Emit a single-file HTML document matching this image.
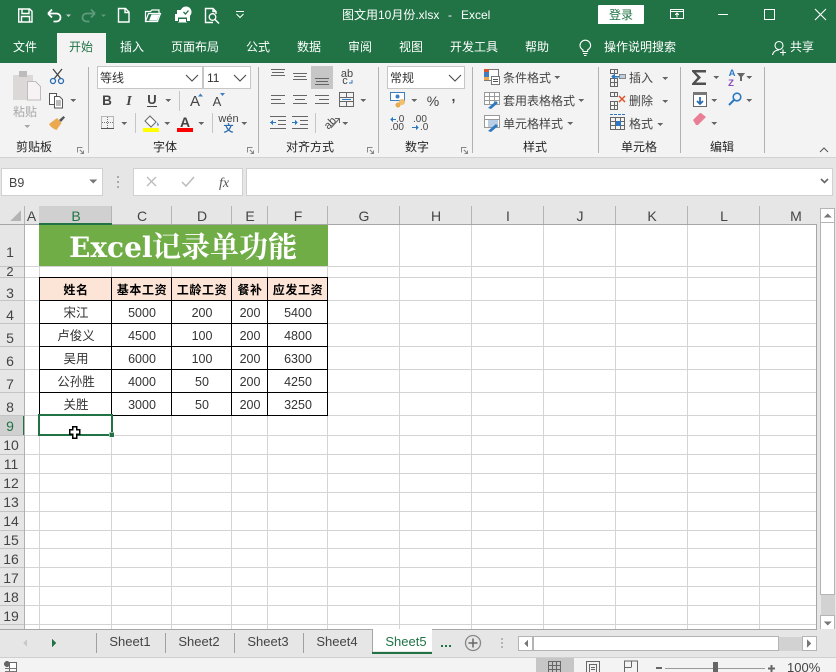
<!DOCTYPE html>
<html><head><meta charset="utf-8"><style>
html,body{margin:0;padding:0;background:#fff}
svg{display:block;font-family:"Liberation Sans","Noto Sans CJK SC",sans-serif;font-size:12px}
.w{fill:#fff}.t{fill:#262626}.c{text-anchor:middle}
.g text{fill:#262626;text-anchor:middle}
.r text{fill:#444;text-anchor:middle;font-size:14px}
.b text{fill:#333;text-anchor:middle;font-size:12.5px}
.h text{fill:#000;text-anchor:middle;font-weight:700;font-size:12px;letter-spacing:.6px}
.ln{stroke:#d4d4d4;stroke-width:1;fill:none}
.k{stroke:#000;stroke-width:1;fill:none}
.i{stroke:#666;stroke-width:1;fill:none}
.q{stroke:#fff;fill:none;stroke-width:1.4}
</style></head><body>
<svg width="836" height="672" viewBox="0 0 836 672" shape-rendering="crispEdges">
<defs><path id="d" d="M0 0h6l-3 3z" fill="#666"/></defs>
<rect width="836" height="672" fill="#fff"/>
<!-- title / tabs -->
<rect width="836" height="63" fill="#217346"/>
<rect x="57" y="33" width="49" height="30" fill="#f3f3f3"/>
<!-- QAT -->
<g shape-rendering="auto">
<path class="q" d="M18.7 9h11l2.3 2.3V22H18.7zM22 9v4.500h7V9M21.500 22v-5.500h8V22" stroke-width="1.500"/>
<path d="M48 13.500l4-4M48 13.500l4 4M48 13.500h8.500a4 4 0 0 1 0 8h-3" fill="none" stroke="#fff" stroke-width="1.800"/>
<path d="M66 14.500h5l-2.500 2.500z" fill="#ccc"/>
<path d="M95 13.500l-4-4M95 13.500l-4 4M95 13.500h-8.500a4 4 0 0 0 0 8h3" fill="none" stroke="#5f9a7b" stroke-width="1.800"/>
<path d="M101 14.500h5l-2.500 2.500z" fill="#5f9a7b"/>
<path class="q" d="M118.500 8.500h7l3.500 3.500v10h-10.500zM125 8.500v4h4" stroke-width="1.200"/>
<path d="M145.500 21.500v-10h5l1.500-1.500h7v3M145.500 21.500l3-8h12l-3 8z" fill="none" stroke="#fff" stroke-width="1.200"/><path d="M149 20.500l2.500-6h8l-2.500 6z" class="w"/>
<path d="M175 14h15v7h-3v2h-9v-2h-3z" class="w"/><rect x="178" y="17.500" width="9" height="5" fill="#217346"/><rect x="179" y="19" width="7" height="3" fill="#fff"/><circle cx="186" cy="12" r="5.500" fill="#fff"/><path d="M183.500 12l2 2 3-3.500" fill="none" stroke="#217346" stroke-width="1.300"/><rect x="177" y="10" width="4" height="4" fill="#fff"/>
<path class="q" d="M216 14V11.500L213 8.500h-7.500V22.500H213M213 8.500v3h3" stroke-width="1.200"/><circle cx="212.500" cy="17" r="3.300" fill="none" stroke="#fff" stroke-width="1.300"/><path d="M215 19.500l4 4" stroke="#fff" stroke-width="1.500"/>
<path d="M236 11.500h8M236.500 14l3.500 3.500 3.500-3.500" fill="none" stroke="#fff" stroke-width="1.100"/>
</g>
<text x="342" y="19" class="w">图文用10月份.xlsx</text><text x="448" y="19" class="w">-</text><text x="461" y="19" class="w">Excel</text>
<rect x="598" y="5" width="46" height="19" rx="1" fill="#fff"/>
<text x="621" y="19" class="c" style="fill:#217346">登录</text>
<path d="M670.500 9.500h13v9h-13zM670.500 11.500h13M677 17.500v-4M675 15l2-2 2 2" fill="none" stroke="#fff"/>
<rect x="718" y="14" width="10" height="1" fill="#fff"/>
<rect x="764.500" y="9.500" width="10" height="10" fill="none" stroke="#fff"/>
<path d="M815 9l11 11M826 9l-11 11" stroke="#fff" stroke-width="1.100" shape-rendering="auto"/>
<g class="w">
<text x="13" y="51">文件</text><text x="120" y="51">插入</text><text x="171" y="51">页面布局</text><text x="246" y="51">公式</text><text x="297" y="51">数据</text><text x="348" y="51">审阅</text><text x="399" y="51">视图</text><text x="450" y="51">开发工具</text><text x="525" y="51">帮助</text><text x="604" y="51">操作说明搜索</text><text x="790" y="51">共享</text>
</g>
<text x="69" y="51" style="fill:#217346">开始</text>
<g shape-rendering="auto" fill="none" stroke="#fff">
<path d="M583 51.500v-1.500c-1.500-1-3-2.500-3-4.500a5.300 5.300 0 0 1 10.600 0c0 2-1.500 3.500-3 4.500v1.500zM583 53.500h4.500M584 55.500h2.500" stroke-width="1.100"/>
<circle cx="779" cy="45.500" r="4" stroke-width="1.100"/><path d="M772.500 55c.5-3 3-5 6.500-5M780 52.500h6M783 49.500v6" stroke-width="1.100"/>
</g>
<!-- ribbon -->
<rect y="63" width="836" height="94" fill="#f3f3f3"/>
<rect y="157" width="836" height="68" fill="#e6e6e6"/>
<rect y="157" width="836" height="1" fill="#d2d2d2"/>
<g fill="#b1b1b1"><rect x="88" y="67" width="1" height="86"/><rect x="258" y="67" width="1" height="86"/><rect x="378" y="67" width="1" height="86"/><rect x="472" y="67" width="1" height="86"/><rect x="598" y="67" width="1" height="86"/><rect x="680" y="67" width="1" height="86"/><rect x="764" y="67" width="1" height="86"/>
<rect x="179" y="91" width="1" height="20" fill="#c6c6c6"/><rect x="135" y="113" width="1" height="20" fill="#c6c6c6"/><rect x="212" y="113" width="1" height="20" fill="#c6c6c6"/><rect x="315" y="113" width="1" height="20" fill="#c6c6c6"/></g>
<g class="g">
<text x="34" y="151">剪贴板</text><text x="165" y="151">字体</text><text x="310" y="151">对齐方式</text><text x="417" y="151">数字</text><text x="535" y="151">样式</text><text x="639" y="151">单元格</text><text x="722" y="151">编辑</text>
</g>
<!-- dialog launchers -->
<g fill="none" stroke="#888"><path d="M77.500 152.500v-5h5M84 154l-4-4M80.500 153.500h3v-3"/><path d="M247.500 152.500v-5h5M254 154l-4-4M250.500 153.500h3v-3"/><path d="M367.500 152.500v-5h5M374 154l-4-4M370.500 153.500h3v-3"/><path d="M461.500 152.500v-5h5M468 154l-4-4M464.500 153.500h3v-3"/></g>
<!-- clipboard group -->
<rect x="13" y="75" width="20" height="25" rx="1" fill="#dcd8d8"/><rect x="19" y="71" width="8" height="6" fill="#bcbcbc"/>
<path d="M27.500 81.500h8l5 5v13.500h-13z" fill="#f7f3f5" stroke="#bdbdbd"/>
<text x="25" y="116" class="c" style="fill:#a8a8a8;font-size:12px">粘贴</text>
<use href="#d" x="24" y="125" style="opacity:.55"/>
<g shape-rendering="auto">
<path d="M53 69l8 10M62 69l-8 10" stroke="#444" stroke-width="1.300" fill="none"/><circle cx="53" cy="81" r="2.500" fill="none" stroke="#2b6cb0" stroke-width="1.300"/><circle cx="61" cy="81" r="2.500" fill="none" stroke="#2b6cb0" stroke-width="1.300"/>
<path d="M49.500 93.500h7v11h-7z" fill="#fff" stroke="#555"/><path d="M54.500 96.500h5l3 3v8.500h-8z" fill="#fff" stroke="#555"/><path d="M56 101h5M56 103h5M56 105h5" stroke="#777"/>
<path d="M59 120l4.500-4 1.500 1.500-4 4.500z" fill="#555"/><path d="M49 124l8-6 4.500 5-5 7c-3-1-6-3-7.500-6z" fill="#eba950"/>
</g>
<use href="#d" x="70" y="99"/>
<!-- font boxes -->
<g fill="#fff" stroke="#c6c6c6"><rect x="97.500" y="66.500" width="105" height="22"/><rect x="203.500" y="66.500" width="47" height="22"/><rect x="387.500" y="66.500" width="77" height="22"/></g>
<text x="100" y="82" style="fill:#333">等线</text><text x="207" y="82" style="fill:#333">11</text><text x="390" y="82" style="fill:#333">常规</text>
<g fill="none" stroke="#444" shape-rendering="auto"><path d="M186 75l6 6 6-6M234 75l6 6 6-6M449 75l6 6 6-6"/></g>
<g shape-rendering="auto">
<text x="107" y="105" class="c" style="fill:#444;font-weight:700;font-size:13.500px">B</text>
<text x="129" y="105" class="c" style="fill:#444;font-style:italic;font-family:'Liberation Serif';font-weight:700;font-size:14px">I</text>
<text x="152" y="104" class="c" style="fill:#444;font-weight:700;font-size:13px">U</text><rect x="147" y="106" width="10" height="1" fill="#444"/>
<text x="195" y="106" class="c" style="fill:#444;font-size:15px">A</text><path d="M198 96.500l2.500-3 2.500 3z" fill="#3f7fbf"/>
<text x="217" y="106" class="c" style="fill:#444;font-size:13px">A</text><path d="M220 93h5l-2.500 3z" fill="#3f7fbf"/>
</g>
<use href="#d" x="165" y="99"/>
<rect x="101.500" y="116.500" width="12" height="12" fill="none" stroke="#777" stroke-dasharray="1 1"/><path d="M107.500 117v12M102 122.500h12" stroke="#777" stroke-dasharray="1 1"/><rect x="101" y="128" width="13" height="1" fill="#555"/>
<use href="#d" x="121" y="122"/>
<g shape-rendering="auto"><path d="M150 116l6 6-5 5-6-6z" fill="#fff" stroke="#666"/><path d="M157 122l2 3-1.500 1z" fill="#2b79c2"/></g>
<rect x="143" y="128" width="16" height="4" fill="#ffff00"/>
<use href="#d" x="164" y="122"/>
<text x="185" y="127" class="c" style="fill:#444;font-weight:700;font-size:14px">A</text>
<rect x="177" y="128" width="16" height="4" fill="#ff0000"/>
<use href="#d" x="198" y="122"/>
<text x="228.500" y="122" class="c" style="fill:#444;font-size:11px">wén</text>
<text x="228.500" y="132" class="c" style="fill:#2b6cb0;font-size:10px;font-weight:700">文</text>
<use href="#d" x="241" y="122"/>
<!-- alignment -->
<rect x="311" y="66" width="22" height="23" fill="#c6c6c6"/>
<g stroke="#666" fill="none">
<path d="M271 69.500h14M272 72.500h12M271 75.500h14"/>
<path d="M293 73.500h14M294 76.500h12M293 79.500h14"/>
<path d="M315 78.500h14M316 81.500h12M315 84.500h14"/>
<path d="M271 95.500h14M271 99.500h10M271 103.500h14M293 95.500h14M295 99.500h10M293 103.500h14M315 95.500h14M319 99.500h10M315 103.500h14"/>
<path d="M278 120.500h8M278 124.500h8M270 116.500h16M270 128.500h16"/>
<path d="M300 120.500h8M300 124.500h8M292 116.500h16M292 128.500h16"/>
<rect x="339.500" y="92.500" width="14" height="14"/><path d="M340 97.500h13M340 101.500h13M346.500 92v5M346.500 102v5"/>
</g>
<path d="M342 99.500h9" stroke="#2b79c2"/>
<path d="M270 122.500h6M296 122.500h-4" stroke="#2b79c2"/><path d="M270 122.500l3-2.500v5zM298 122.500l-3-2.500v5z" fill="#2b79c2"/>
<text x="347" y="77" class="c" style="fill:#444;font-size:11px">ab</text><text x="345" y="84" class="c" style="fill:#444;font-size:11px">c</text><path d="M352 80v3h-3" fill="none" stroke="#2b79c2"/>
<use href="#d" x="360" y="99"/>
<g shape-rendering="auto"><text x="329" y="127" class="c" style="fill:#444;font-size:11px" transform="rotate(-45 329 122)">ab</text><path d="M331 128l8-9M335 118.500h4.500v4.500" fill="none" stroke="#666"/></g>
<use href="#d" x="342" y="122"/>
<!-- number -->
<rect x="390.500" y="92.500" width="14" height="8" fill="#fff" stroke="#3f7fbf"/><circle cx="397.500" cy="96.500" r="2" fill="#3f7fbf"/><circle cx="402" cy="102" r="3" fill="#f0c070"/><circle cx="398" cy="105" r="2.500" fill="#eba950"/>
<use href="#d" x="411" y="99"/>
<text x="433" y="106" class="c" style="fill:#444;font-size:14px">%</text>
<text x="453.500" y="101" class="c" style="fill:#444;font-weight:700;font-size:14px">,</text>
<g shape-rendering="auto"><text x="396" y="122" style="fill:#444;font-size:10px">.0</text><text x="390" y="130" style="fill:#444;font-size:10px">.00</text><text x="413" y="122" style="fill:#444;font-size:10px">.00</text><text x="420" y="130" style="fill:#444;font-size:10px">.0</text></g>
<path d="M391 119.500h5M412 127.500h6" stroke="#2b79c2"/><path d="M390 119.500l3-2.500v5zM419 127.500l-3-2.500v5z" fill="#2b79c2"/>
<!-- styles -->
<rect x="484.500" y="69.500" width="14" height="11" fill="#fff" stroke="#777"/><rect x="484" y="69" width="5" height="3" fill="#d9552b"/><rect x="484" y="72" width="5" height="5" fill="#3f7fbf"/><rect x="484" y="77" width="5" height="3" fill="#eba950"/><rect x="491.500" y="76.500" width="8" height="8" fill="#fff" stroke="#777"/><path d="M493 79.500h5M493 81.500h5" stroke="#555"/>
<g fill="none" stroke="#999"><rect x="484.500" y="92.500" width="15" height="12" fill="#fff"/><path d="M484 96.500h15M484 100.500h15M489.500 92v12M494.500 92v12"/><rect x="484.500" y="115.500" width="15" height="12" fill="#fff"/><path d="M484 119.500h15"/></g>
<rect x="488" y="120" width="10" height="7" fill="#b9cde4"/>
<path d="M488 108l8-7 2 2-7 6z" fill="#2b79c2" shape-rendering="auto"/><path d="M488 131l8-7 2 2-7 6z" fill="#2b79c2" shape-rendering="auto"/>
<text x="503" y="82" style="fill:#444">条件格式</text><text x="503" y="105" style="fill:#444">套用表格格式</text><text x="503" y="128" style="fill:#444">单元格样式</text>
<use href="#d" x="554" y="76"/><use href="#d" x="578" y="99"/><use href="#d" x="567" y="122"/>
<!-- cells -->
<g fill="none" stroke="#666">
<path d="M610.500 69.500h7v4h-7zM610.500 78.500h7v4h-7zM610.500 78.500v4M614.500 69v4M614.500 78v9M610.500 82.500v4h7v-4"/>
<path d="M610.500 92.500h7v4h-7zM610.500 101.500h7v4h-7zM610.500 105.500v4h7v-4M614.500 92v4M614.500 101v9"/>
<rect x="610.500" y="117.500" width="14" height="12"/><path d="M610 121.500h15M610 125.500h15M615.500 117v13M620.500 117v13"/>
</g>
<path d="M612 76.500h7" stroke="#2b79c2" stroke-width="1.500"/><rect x="619.500" y="74.500" width="6" height="4" fill="#bcd" stroke="#888"/><path d="M611 76.500l4-3v6z" fill="#2b79c2"/>
<path d="M619 96l6 6M625 96l-6 6" stroke="#d9552b" stroke-width="1.500" shape-rendering="auto"/>
<path d="M610 114.500h15" stroke="#2b79c2" stroke-dasharray="3 1"/><rect x="616" y="121" width="5" height="5" fill="#2b79c2"/>
<text x="629" y="82" style="fill:#444">插入</text><text x="629" y="105" style="fill:#444">删除</text><text x="629" y="128" style="fill:#444">格式</text>
<use href="#d" x="662" y="77"/><use href="#d" x="662" y="100"/><use href="#d" x="657" y="123"/>
<!-- editing -->
<path d="M692 70h14v2.500h-10l5 5-5 5h10v2.500h-14v-1.500l5.500-6-5.500-6z" fill="#505050" shape-rendering="auto"/>
<use href="#d" x="713" y="76"/>
<text x="732" y="76" class="c" style="fill:#2b79c2;font-size:9.500px;font-weight:700">A</text>
<text x="731" y="86" class="c" style="fill:#8a4bb5;font-size:9.500px;font-weight:700">Z</text>
<path d="M737 73h8l-3 4v4h-2v-4z" fill="#666"/>
<use href="#d" x="746" y="76"/>
<rect x="693.500" y="92.500" width="13" height="14" fill="#fff" stroke="#666"/><rect x="693" y="92" width="14" height="3" fill="#777"/><path d="M700 97v7M697 101l3 3 3-3" stroke="#2b6cb0" stroke-width="1.800" fill="none" shape-rendering="auto"/>
<use href="#d" x="711" y="99"/>
<g shape-rendering="auto"><circle cx="737" cy="97" r="3.800" fill="none" stroke="#2b79c2" stroke-width="1.600"/><path d="M734 100l-5 5" stroke="#2b79c2" stroke-width="2"/><path d="M693 120l7-7 1 0 5 4-8 8-2 0z" fill="#e97f95"/></g>
<use href="#d" x="746" y="99"/><use href="#d" x="711" y="122"/>
<path d="M820 152l4-4 4 4" fill="none" stroke="#555" shape-rendering="auto"/>
<!-- formula bar -->
<g fill="#fff" stroke="#d0d0d0"><rect x="1.500" y="168.500" width="101" height="27"/><rect x="133.500" y="168.500" width="109" height="27"/><rect x="246.500" y="168.500" width="586" height="27"/></g>
<text x="9" y="187" style="fill:#444;font-size:12.500px">B9</text>
<path d="M89 179.500h8l-4 4z" fill="#777"/>
<g fill="#aaa"><rect x="117" y="176" width="2" height="2"/><rect x="117" y="181" width="2" height="2"/><rect x="117" y="186" width="2" height="2"/></g>
<g shape-rendering="auto"><path d="M147 177l9 9M156 177l-9 9" stroke="#bbb" stroke-width="1.300"/><path d="M182 182l4 4 8-9" stroke="#bbb" stroke-width="1.500" fill="none"/>
<text x="224" y="187" class="c" style="fill:#555;font-family:'Liberation Serif';font-style:italic;font-size:14px">fx</text>
<path d="M821 179l3.500 3.500 3.500-3.500" fill="none" stroke="#666" stroke-width="1.600"/></g>
<!-- col header -->
<rect y="206" width="820" height="19" fill="#e6e6e6"/>
<rect x="39" y="206" width="73" height="18" fill="#d0d0d0"/>
<path d="M10 221L21 210V221z" fill="#b4b4b4"/>
<g fill="#b4b4b4"><rect x="24" y="206" width="1" height="18"/><rect x="111" y="206" width="1" height="18"/><rect x="171" y="206" width="1" height="18"/><rect x="231" y="206" width="1" height="18"/><rect x="267" y="206" width="1" height="18"/><rect x="327" y="206" width="1" height="18"/><rect x="399" y="206" width="1" height="18"/><rect x="471" y="206" width="1" height="18"/><rect x="543" y="206" width="1" height="18"/><rect x="615" y="206" width="1" height="18"/><rect x="687" y="206" width="1" height="18"/><rect x="759" y="206" width="1" height="18"/></g>
<rect x="0" y="224" width="817" height="1" fill="#a6a6a6"/>
<rect x="39" y="223" width="73" height="2" fill="#217346"/>
<g class="r">
<text x="31.500" y="221">A</text><text x="76" y="221" style="fill:#217346">B</text><text x="142" y="221">C</text><text x="202" y="221">D</text><text x="250" y="221">E</text><text x="298" y="221">F</text><text x="364" y="221">G</text><text x="436" y="221">H</text><text x="508" y="221">I</text><text x="580" y="221">J</text><text x="652" y="221">K</text><text x="724" y="221">L</text><text x="796" y="221">M</text>
</g>
<!-- row header -->
<rect y="225" width="24" height="404" fill="#e6e6e6"/>
<rect y="415" width="24" height="20" fill="#d0d0d0"/>
<rect x="23" y="415" width="2" height="20" fill="#217346"/>
<g fill="#c4c4c4"><rect x="0" y="266" width="24" height="1"/><rect x="0" y="277" width="24" height="1"/><rect x="0" y="300" width="24" height="1"/><rect x="0" y="323" width="24" height="1"/><rect x="0" y="346" width="24" height="1"/><rect x="0" y="369" width="24" height="1"/><rect x="0" y="392" width="24" height="1"/><rect x="0" y="415" width="24" height="1"/><rect x="0" y="435" width="24" height="1"/><rect x="0" y="454" width="24" height="1"/><rect x="0" y="473" width="24" height="1"/><rect x="0" y="492" width="24" height="1"/><rect x="0" y="511" width="24" height="1"/><rect x="0" y="530" width="24" height="1"/><rect x="0" y="548" width="24" height="1"/><rect x="0" y="567" width="24" height="1"/><rect x="0" y="586" width="24" height="1"/><rect x="0" y="605" width="24" height="1"/><rect x="0" y="624" width="24" height="1"/></g>
<rect x="24" y="225" width="1" height="404" fill="#b0b0b0"/>
<g class="r">
<text x="10" y="257">1</text><text x="10" y="276" style="font-size:13px">2</text><text x="10" y="298">3</text><text x="10" y="320">4</text><text x="10" y="343">5</text><text x="10" y="366">6</text><text x="10" y="389">7</text><text x="10" y="412">8</text><text x="10" y="431" style="fill:#217346">9</text><text x="11" y="450">10</text><text x="11" y="469">11</text><text x="11" y="488">12</text><text x="11" y="507">13</text><text x="11" y="526">14</text><text x="11" y="545">15</text><text x="11" y="564">16</text><text x="11" y="583">17</text><text x="11" y="602">18</text><text x="11" y="621">19</text>
</g>
<!-- grid -->
<g class="ln">
<path d="M39.500 225V629M111.500 225V629M171.500 225V629M231.500 225V629M267.500 225V629M327.500 225V629M399.500 225V629M471.500 225V629M543.500 225V629M615.500 225V629M687.500 225V629M759.500 225V629"/>
<path d="M25 266.500H816M25 277.500H816M25 300.500H816M25 323.500H816M25 346.500H816M25 369.500H816M25 392.500H816M25 415.500H816M25 435.500H816M25 454.500H816M25 473.500H816M25 492.500H816M25 511.500H816M25 530.500H816M25 548.500H816M25 567.500H816M25 586.500H816M25 605.500H816M25 624.500H816"/>
</g>
<rect x="39" y="225" width="289" height="41" fill="#70ad47"/>
<text x="69" y="257" shape-rendering="auto" style="fill:#fff;font-family:'DejaVu Serif','Noto Serif CJK SC',serif;font-weight:700;font-size:28px">Excel</text>
<text x="152" y="257" shape-rendering="auto" style="fill:#fff;font-family:'Noto Serif CJK SC',serif;font-weight:700;font-size:29px">记录单功能</text>
<rect x="39" y="277" width="289" height="23" fill="#fce4d6"/>
<g class="k">
<path d="M39.500 277.500H327.500V415.500H39.500zM39.500 300.500H327.500M39.500 323.500H327.500M39.500 346.500H327.500M39.500 369.500H327.500M39.500 392.500H327.500M111.500 277V416M171.500 277V416M231.500 277V416M267.500 277V416"/>
</g>
<g class="h"><text x="76" y="294">姓名</text><text x="142" y="294">基本工资</text><text x="202" y="294">工龄工资</text><text x="250" y="294">餐补</text><text x="298" y="294">应发工资</text></g>
<g class="b">
<text x="76" y="317">宋江</text><text x="142" y="317">5000</text><text x="202" y="317">200</text><text x="250" y="317">200</text><text x="298" y="317">5400</text>
<text x="76" y="340">卢俊义</text><text x="142" y="340">4500</text><text x="202" y="340">100</text><text x="250" y="340">200</text><text x="298" y="340">4800</text>
<text x="76" y="363">吴用</text><text x="142" y="363">6000</text><text x="202" y="363">100</text><text x="250" y="363">200</text><text x="298" y="363">6300</text>
<text x="76" y="386">公孙胜</text><text x="142" y="386">4000</text><text x="202" y="386">50</text><text x="250" y="386">200</text><text x="298" y="386">4250</text>
<text x="76" y="409">关胜</text><text x="142" y="409">3000</text><text x="202" y="409">50</text><text x="250" y="409">200</text><text x="298" y="409">3250</text>
</g>
<!-- selection -->
<rect x="39" y="415" width="73" height="20" fill="none" stroke="#217346" stroke-width="2"/>
<rect x="109" y="432" width="5" height="5" fill="#217346" stroke="#fff" stroke-width=".5"/>
<path d="M72.500 426.500h4v3h3v4.500h-3v4h-4v-4h-3v-4.500h3z" fill="#fff" stroke="#000" stroke-width="1.500"/>
<!-- right edges and scrollbar -->
<rect x="817" y="206" width="19" height="423" fill="#e6e6e6"/>
<rect x="816" y="225" width="1" height="404" fill="#a6a6a6"/>
<rect x="820.500" y="208.500" width="14" height="14" fill="#fff" stroke="#b4b4b4"/>
<path d="M823.500 217.500h8l-4-4z" fill="#777"/>
<rect x="820.500" y="222.500" width="14" height="372" fill="#fff" stroke="#b4b4b4"/>
<rect x="821" y="595" width="14" height="20" fill="#d2d2d2"/>
<rect x="820.500" y="615.500" width="14" height="14" fill="#fff" stroke="#b4b4b4"/>
<path d="M823.500 621.500h8l-4 4z" fill="#777"/>
<!-- tab bar -->
<rect y="629" width="836" height="28" fill="#e6e6e6"/>
<rect y="629" width="817" height="1" fill="#a6a6a6"/>
<rect y="657" width="836" height="1" fill="#cfcfcf"/>
<path d="M27 639v8l-4-4z" fill="#c8c8c8"/><path d="M52 639v8l4-4z" fill="#217346"/>
<g fill="#a0a0a0"><rect x="96" y="633" width="1" height="20"/><rect x="165" y="633" width="1" height="20"/><rect x="234" y="633" width="1" height="20"/><rect x="303" y="633" width="1" height="20"/></g>
<rect x="372" y="629" width="60" height="22" fill="#fff"/>
<rect x="372" y="652" width="60" height="2" fill="#217346"/>
<rect x="372" y="629" width="1" height="23" fill="#a6a6a6"/>
<text x="130" y="646" class="c" style="fill:#444;font-size:13px">Sheet1</text><text x="199" y="646" class="c" style="fill:#444;font-size:13px">Sheet2</text><text x="268" y="646" class="c" style="fill:#444;font-size:13px">Sheet3</text><text x="337" y="646" class="c" style="fill:#444;font-size:13px">Sheet4</text><text x="406" y="646" class="c" style="fill:#217346;font-size:13px">Sheet5</text>
<g fill="#217346"><rect x="441" y="645" width="2" height="2"/><rect x="445" y="645" width="2" height="2"/><rect x="449" y="645" width="2" height="2"/></g>
<g shape-rendering="auto"><circle cx="473" cy="643" r="7.500" fill="none" stroke="#888" stroke-width="1.300"/><path d="M468.500 643h9M473 638.500v9" stroke="#666" stroke-width="1.500"/></g>
<g fill="#b4b4b4"><rect x="501" y="638" width="2" height="2"/><rect x="501" y="642" width="2" height="2"/><rect x="501" y="646" width="2" height="2"/></g>
<rect x="518.500" y="636.500" width="14" height="14" fill="#fff" stroke="#b4b4b4"/>
<path d="M528 639.500v8l-4-4z" fill="#777"/>
<rect x="533.500" y="636.500" width="245" height="14" fill="#fff" stroke="#b4b4b4"/>
<rect x="779" y="637" width="23" height="14" fill="#d2d2d2"/>
<rect x="802.500" y="636.500" width="14" height="14" fill="#fff" stroke="#b4b4b4"/>
<path d="M807 639.500v8l4-4z" fill="#777"/>
<!-- status bar -->
<rect y="658" width="836" height="14" fill="#f3f3f3"/>
<circle cx="7" cy="664" r="3" fill="#666"/><rect x="9.500" y="662.500" width="7" height="10" fill="#fff" stroke="#666"/><path d="M5 668.500h11M5 671.500h11" stroke="#777"/>
<rect x="536" y="658" width="38" height="14" fill="#c6c6c6"/>
<g fill="none" stroke="#666"><path d="M548.500 661.500h12v11h-12zM552.500 661v11M556.500 661v11M548 665.500h13M548 669.500h13"/><path d="M586.500 661.500h13v11h-13zM589.500 664.500h7v8h-7zM591 667.500h4M591 669.500h4"/><path d="M624.500 672v-11h13v11M631.500 661v6M624.500 667.500h7"/></g>
<rect x="656" y="667" width="6" height="2" fill="#666"/>
<rect x="665" y="668" width="100" height="1" fill="#999"/>
<rect x="713" y="662" width="5" height="10" fill="#666"/>
<path d="M768 668.500h7M771.500 665v7" stroke="#666" stroke-width="1.600"/>
<text x="787" y="672" style="fill:#444;font-size:13px">100%</text>
</svg>
</body></html>
